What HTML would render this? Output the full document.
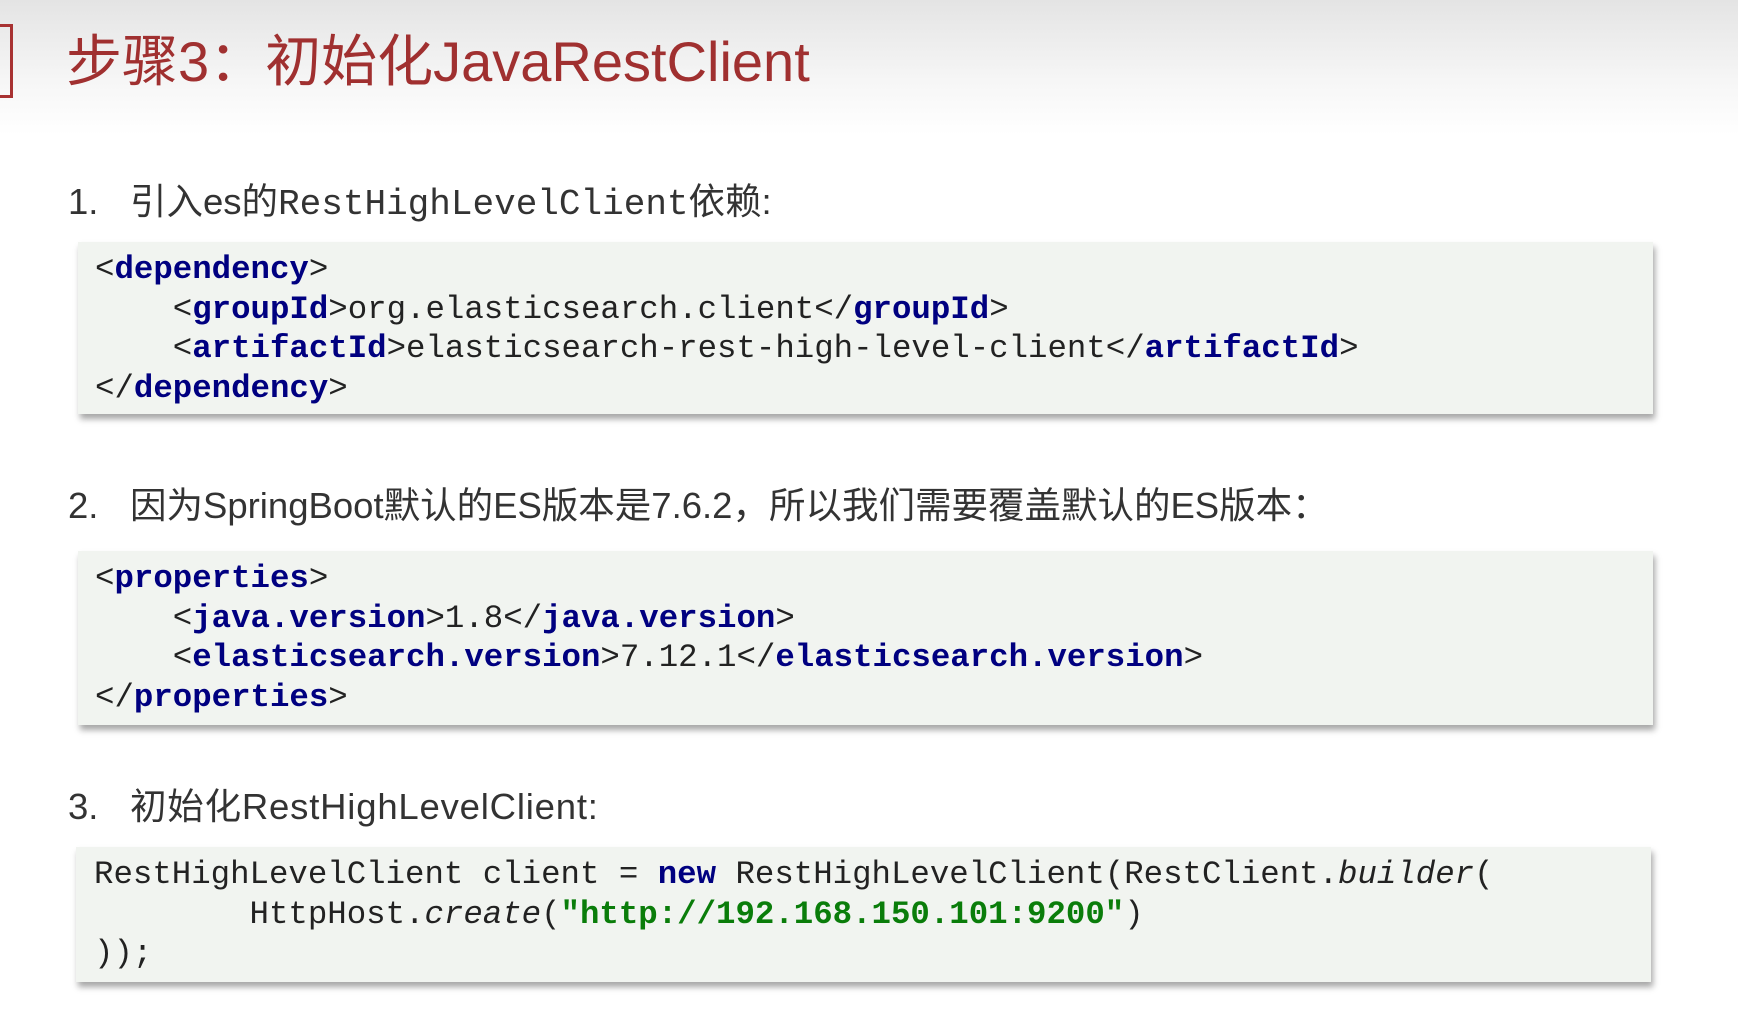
<!DOCTYPE html>
<html><head><meta charset="utf-8">
<style>
html,body{margin:0;padding:0;}
body{width:1738px;height:1019px;position:relative;overflow:hidden;background:#fff;
font-family:"Liberation Sans","Noto Sans CJK SC",sans-serif;}
.hdr{position:absolute;left:0;top:0;width:1738px;height:135px;background:linear-gradient(#e4e4e4,#f6f6f6 60%,#fff);}
.br{position:absolute;left:-4px;top:24px;width:14px;height:68px;border:3px solid #a83232;border-left:none;}
.title{position:absolute;left:66px;top:22px;font-size:56px;color:#a03030;line-height:80px;white-space:nowrap;}
.item{position:absolute;left:68px;font-size:36.5px;color:#333;white-space:nowrap;line-height:44px;}
.item .n{display:inline-block;width:62px;}
.mono{font-family:"Liberation Mono","Noto Sans CJK SC",monospace;font-size:36px;}
.box{position:absolute;background:#f1f4f0;box-shadow:2px 5px 6px rgba(0,0,0,0.35);}
.code{position:absolute;left:17px;margin:0;font-family:"Liberation Mono",monospace;font-size:32.4px;line-height:39.5px;color:#222;white-space:pre;}
.t{color:#000080;font-weight:bold;}
.g{color:#0a7d0a;font-weight:bold;}
i{font-style:italic;}
</style></head><body>
<div class="hdr"></div>
<div class="br"></div>
<div class="title">步骤3：初始化JavaRestClient</div>

<div class="item" style="top:180px;"><span class="n">1.</span>引入es的<span class="mono">RestHighLevelClient</span>依赖:</div>
<div class="box" style="left:78px;top:242px;width:1575px;height:172px;">
<pre class="code" style="top:8px;">&lt;<span class="t">dependency</span>&gt;
    &lt;<span class="t">groupId</span>&gt;org.elasticsearch.client&lt;/<span class="t">groupId</span>&gt;
    &lt;<span class="t">artifactId</span>&gt;elasticsearch-rest-high-level-client&lt;/<span class="t">artifactId</span>&gt;
&lt;/<span class="t">dependency</span>&gt;</pre></div>

<div class="item" style="top:484px;"><span class="n">2.</span>因为SpringBoot默认的ES版本是7.6.2，所以我们需要覆盖默认的ES版本：</div>
<div class="box" style="left:78px;top:551px;width:1575px;height:174px;">
<pre class="code" style="top:8px;">&lt;<span class="t">properties</span>&gt;
    &lt;<span class="t">java.version</span>&gt;1.8&lt;/<span class="t">java.version</span>&gt;
    &lt;<span class="t">elasticsearch.version</span>&gt;7.12.1&lt;/<span class="t">elasticsearch.version</span>&gt;
&lt;/<span class="t">properties</span>&gt;</pre></div>

<div class="item" style="top:785px;"><span class="n">3.</span><span style="letter-spacing:0.8px">初始化RestHighLevelClient:</span></div>
<div class="box" style="left:76px;top:847px;width:1575px;height:135px;">
<pre class="code" style="top:8px;left:18px;">RestHighLevelClient client = <span class="t">new</span> RestHighLevelClient(RestClient.<i>builder</i>(
        HttpHost.<i>create</i>(<span class="g">"http://192.168.150.101:9200"</span>)
));</pre></div>
</body></html>
